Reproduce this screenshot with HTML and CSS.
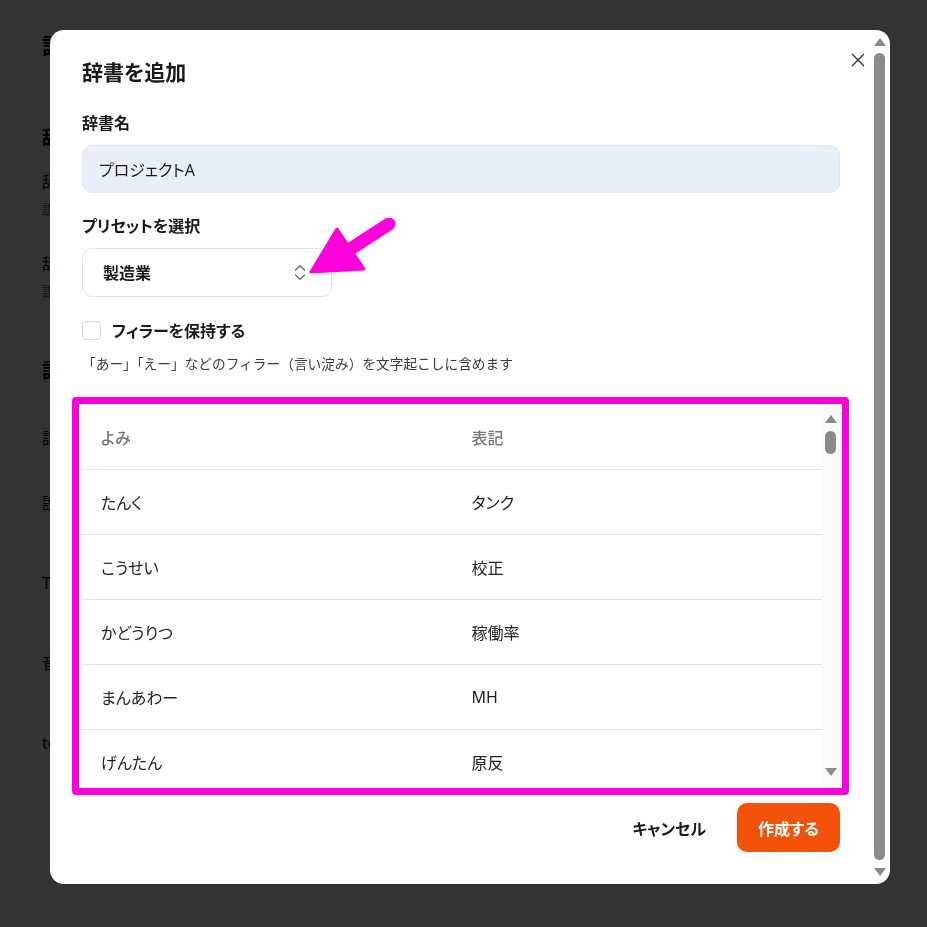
FILE: index.html
```html
<!DOCTYPE html>
<html lang="ja">
<head>
    <meta charset="UTF-8">
    <title>辞書を追加</title>
    <meta name="viewport" content="width=device-width, initial-scale=1.0">
    <link rel="stylesheet" href="styles.css">
</head>
<body>

<!-- page behind the modal -->
<div class="page">
    <h1 class="page-title">設定</h1>
    <h3 class="page-head">辞書</h3>
    <p class="page-row">辞書名</p>
    <p class="page-note">説明</p>
    <p class="page-row gap">辞書名</p>
    <p class="page-note">説明</p>
    <h3 class="page-head big">話者</h3>
    <p class="page-row first">話者</p>
    <p class="page-row">設定</p>
    <p class="page-row wide">Tab</p>
    <p class="page-row wide">音声</p>
    <p class="page-row wide">text</p>
</div>

<div class="backdrop"></div>

<div class="dialog">
    <div class="dialog-body">
        <h2 class="dialog-title">辞書を追加</h2>

        <label class="field-label" for="dictName">辞書名</label>
        <input id="dictName" class="text-input" type="text" value="プロジェクトA">

        <label class="field-label second" for="preset">プリセットを選択</label>
        <div class="select-wrap">
            <select id="preset" class="select">
                <option>製造業</option>
            </select>
            <svg class="select-icon" width="12" height="17" viewBox="0 0 12 17">
                <path d="M1.5 6 L6 1.8 L10.5 6 M1.5 11 L6 15.2 L10.5 11" fill="none" stroke="#666" stroke-width="1.3" stroke-linecap="round" stroke-linejoin="round"/>
            </svg>
        </div>

        <label class="check-row">
            <input type="checkbox" class="check">
            <span>フィラーを保持する</span>
        </label>
        <p class="help">「あー」「えー」などのフィラー（言い淀み）を文字起こしに含めます</p>

        <div class="table-mark">
            <div class="table-box">
                <div class="table-scroll">
                    <table class="dict-table">
                        <thead>
                            <tr><th>よみ</th><th>表記</th></tr>
                        </thead>
                        <tbody>
                            <tr><td>たんく</td><td>タンク</td></tr>
                            <tr><td>こうせい</td><td>校正</td></tr>
                            <tr><td>かどうりつ</td><td>稼働率</td></tr>
                            <tr><td>まんあわー</td><td>MH</td></tr>
                            <tr><td>げんたん</td><td>原反</td></tr>
                        </tbody>
                    </table>
                </div>
                <div class="scrollbar small">
                    <span class="arrow-up"></span>
                    <span class="thumb short"></span>
                    <span class="spacer"></span>
                    <span class="arrow-down"></span>
                </div>
            </div>
        </div>

        <div class="actions">
            <button class="btn-cancel">キャンセル</button>
            <button class="btn-primary">作成する</button>
        </div>
    </div>

    <div class="scrollbar">
        <span class="arrow-up"></span>
        <span class="thumb"></span>
        <span class="arrow-down"></span>
    </div>

    <button class="close" aria-label="閉じる">
        <svg width="14" height="14" viewBox="0 0 14 14">
            <path d="M1.5 1.5 L12.5 12.5 M12.5 1.5 L1.5 12.5" stroke="#333" stroke-width="1.4" stroke-linecap="round"/>
        </svg>
    </button>

    <!-- annotation arrow -->
    <svg class="pointer" width="100" height="64" viewBox="0 0 100 64">
        <path d="M44 32 L84 6" stroke="#ff00dc" stroke-width="13" stroke-linecap="round"/>
        <polygon points="6,54 32,11 59,51" fill="#ff00dc" stroke="#ff00dc" stroke-width="3" stroke-linejoin="round"/>
    </svg>
</div>

</body>
</html>
```

FILE: styles.css
```css
* { box-sizing: border-box; }
body {
    margin: 0;
    background: #fff;
    color: #1a1a1a;
    font-family: 'Noto Sans', 'Noto Sans CJK JP', sans-serif;
    font-feature-settings: "palt";
}

/* background page */
.page { padding: 28px 0 0 42px; width: 400px; }
.page p, .page h1, .page h3 { margin: 0; color: #000; }
.page-title { font-size: 22px; line-height: 34px; }
.page-head { font-size: 18px; line-height: 26px; margin-top: 62px !important; }
.page-head.big { margin-top: 58px !important; font-size: 20px; }
.page-row { font-size: 16px; line-height: 24px; margin-top: 20px !important; }
.page-row.gap { margin-top: 34px !important; }
.page-note { font-size: 13px; line-height: 18px; margin-top: 6px !important; color: #555 !important; }
.page-row.first { margin-top: 42px !important; }
.page-row + .page-row { margin-top: 41px !important; }
.page-row + .page-row.wide { margin-top: 56px !important; }

.backdrop {
    position: fixed;
    inset: 0;
    background: rgba(0, 0, 0, 0.8);
}

/* modal */
.dialog {
    position: fixed;
    left: 50px;
    top: 30px;
    width: 840px;
    height: 854px;
    background: #fff;
    border-radius: 14px;
    display: flex;
    overflow: hidden;
}
.dialog-body {
    flex: 1;
    min-width: 0;
    padding: 26px 33px 32px 32px;
    display: flex;
    flex-direction: column;
}
.dialog-title {
    margin: 0;
    font-size: 21px;
    line-height: 32px;
    font-weight: 700;
}
.field-label {
    display: block;
    margin-top: 23px;
    font-size: 16px;
    line-height: 24px;
    font-weight: 700;
}
.field-label.second { margin-top: 21px; }
.text-input {
    margin-top: 10px;
    height: 48px;
    width: 100%;
    padding: 0 16px;
    border: 1px solid #dfe6f2;
    border-radius: 10px;
    background: #e8effb;
    font: inherit;
    font-size: 16px;
    color: #1a1a1a;
}
.select-wrap {
    position: relative;
    margin-top: 10px;
    width: 250px;
    height: 49px;
}
.select {
    appearance: none;
    width: 100%;
    height: 100%;
    padding: 0 20px;
    border: 1px solid #e3e3e3;
    border-radius: 10px;
    background: #fff;
    font: inherit;
    font-size: 16px;
    font-weight: 700;
    color: #1a1a1a;
}
.select-icon { position: absolute; right: 26px; top: 16px; }

.check-row {
    margin-top: 21px;
    display: flex;
    align-items: center;
    gap: 11px;
    height: 24px;
    font-size: 16px;
    font-weight: 700;
}
.check {
    appearance: none;
    margin: 0;
    width: 19px;
    height: 19px;
    border: 1px solid #d4d4d4;
    border-radius: 4px;
    background: #fff;
}
.help {
    margin: 12px 0 0;
    font-size: 13.7px;
    line-height: 20px;
    color: #3a3a3a;
    font-feature-settings: normal;
}

/* dictionary table, outlined by the pink marker */
.table-mark {
    margin: 23px -9px 0 -10px;
    height: 398px;
    border: 7px solid #ff00dc;
    border-radius: 4px;
    padding: 2px 1px 2px 2px;
}
.table-box {
    height: 100%;
    display: flex;
    overflow: hidden;
}
.table-scroll {
    flex: 1;
    min-width: 0;
}
.dict-table {
    width: 100%;
    border-collapse: collapse;
    table-layout: fixed;
}
.dict-table th, .dict-table td {
    text-align: left;
    padding: 0 20px;
    font-size: 16px;
    border-bottom: 1px solid #e4e4e4;
}
.dict-table th {
    height: 63px;
    font-weight: 500;
    color: #777;
}
.dict-table td {
    height: 65px;
    font-weight: 400;
    color: #222;
}

.actions {
    margin-top: 8px;
    display: flex;
    justify-content: flex-end;
    gap: 15px;
}
.btn-cancel, .btn-primary {
    height: 49px;
    border: none;
    border-radius: 10px;
    font: inherit;
    font-size: 16px;
    font-weight: 700;
    cursor: pointer;
}
.btn-cancel { background: none; color: #1a1a1a; padding: 0 16px; }
.btn-primary { background: #f2520a; color: #fff; padding: 0 20px; width: 103px; }

/* fake classic scrollbars */
.scrollbar {
    width: 17px;
    flex: none;
    display: flex;
    flex-direction: column;
    align-items: center;
    padding: 8px 4px 8px 0;
}
.scrollbar .thumb {
    flex: 1;
    width: 11px;
    margin: 7px 0 8px;
    border-radius: 6px;
    background: #8a8a8a;
}
.arrow-up, .arrow-down {
    width: 0;
    height: 0;
    border-left: 6px solid transparent;
    border-right: 6px solid transparent;
}
.arrow-up { border-bottom: 8px solid #8a8a8a; }
.arrow-down { border-top: 8px solid #8a8a8a; }
.scrollbar.small {
    width: 19px;
    padding: 9px 2px 10px 0;
    background: #fafafa;
}
.scrollbar.small .thumb.short { flex: none; height: 23px; margin: 8px 0 0; }
.scrollbar.small .spacer { flex: 1; }

.close {
    position: absolute;
    top: 23px;
    right: 25px;
    width: 14px;
    height: 14px;
    padding: 0;
    border: none;
    background: none;
    cursor: pointer;
}
.pointer {
    position: absolute;
    left: 255px;
    top: 188px;
}
```
